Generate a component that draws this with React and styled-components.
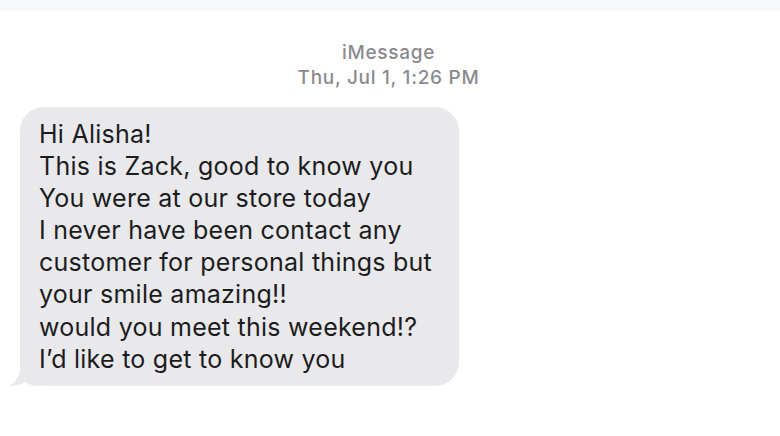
import React from "react";
import styled, { createGlobalStyle } from "styled-components";

const Global = createGlobalStyle`
  html, body { margin: 0; padding: 0; background: #ffffff; }
  body { font-family: Inter, "Noto Sans", "Liberation Sans", sans-serif; -webkit-font-smoothing: antialiased; }
`;

const Page = styled.div`
  width: 780px;
  height: 436px;
  overflow: hidden;
  background: #ffffff;
  display: flex;
  flex-direction: column;
`;

const TopBar = styled.div`
  height: 11px;
  background: #f8f9fb;
  flex-shrink: 0;
`;

const Header = styled.div`
  display: flex;
  flex-direction: column;
  align-items: center;
  padding-top: 29px;
  padding-right: 3px;
  color: #8a8a8e;
  font-size: 19px;
  line-height: 25px;
  letter-spacing: 0.7px;
`;

const Service = styled.div`
  font-weight: 450;
`;

const Stamp = styled.div`
  font-weight: 450;
`;

const Thread = styled.div`
  padding: 17px 0 0 20px;
  display: flex;
`;

const Bubble = styled.div`
  position: relative;
  box-sizing: border-box;
  background: #e9e9eb;
  color: #1c1c1e;
  border-radius: 24px;
  padding: 11px 20px 11px 19px;
  font-size: 25px;
  line-height: 32.1px;
  letter-spacing: 0.25px;
  width: 439px;
`;

const Line = styled.div`
  white-space: nowrap;
`;

const Tail = styled.svg`
  position: absolute;
  left: -11px;
  bottom: 0;
  width: 32px;
  height: 24px;
`;

const lines = [
  "Hi Alisha!",
  "This is Zack, good to know you",
  "You were at our store today",
  "I never have been contact any",
  "customer for personal things but",
  "your smile amazing!!",
  "would you meet this weekend!?",
  "I’d like to get to know you",
];

export default function App() {
  return (
    <>
      <Global />
      <Page>
        <TopBar />
        <Header>
          <Service>iMessage</Service>
          <Stamp>Thu, Jul 1, 1:26 PM</Stamp>
        </Header>
        <Thread>
          <Bubble>
            {lines.map((l, i) => (
              <Line key={i}>{l}</Line>
            ))}
            <Tail viewBox="0 0 32 24">
              <path
                d="M11 0 L20 0 L20 14 C22 19 27 22 32 24 L30 24 C24 24 19 22 16 20 C13 22 7 24 0 24 C6 21 10 15 11 8 Z"
                fill="#e9e9eb"
              />
            </Tail>
          </Bubble>
        </Thread>
      </Page>
    </>
  );
}
